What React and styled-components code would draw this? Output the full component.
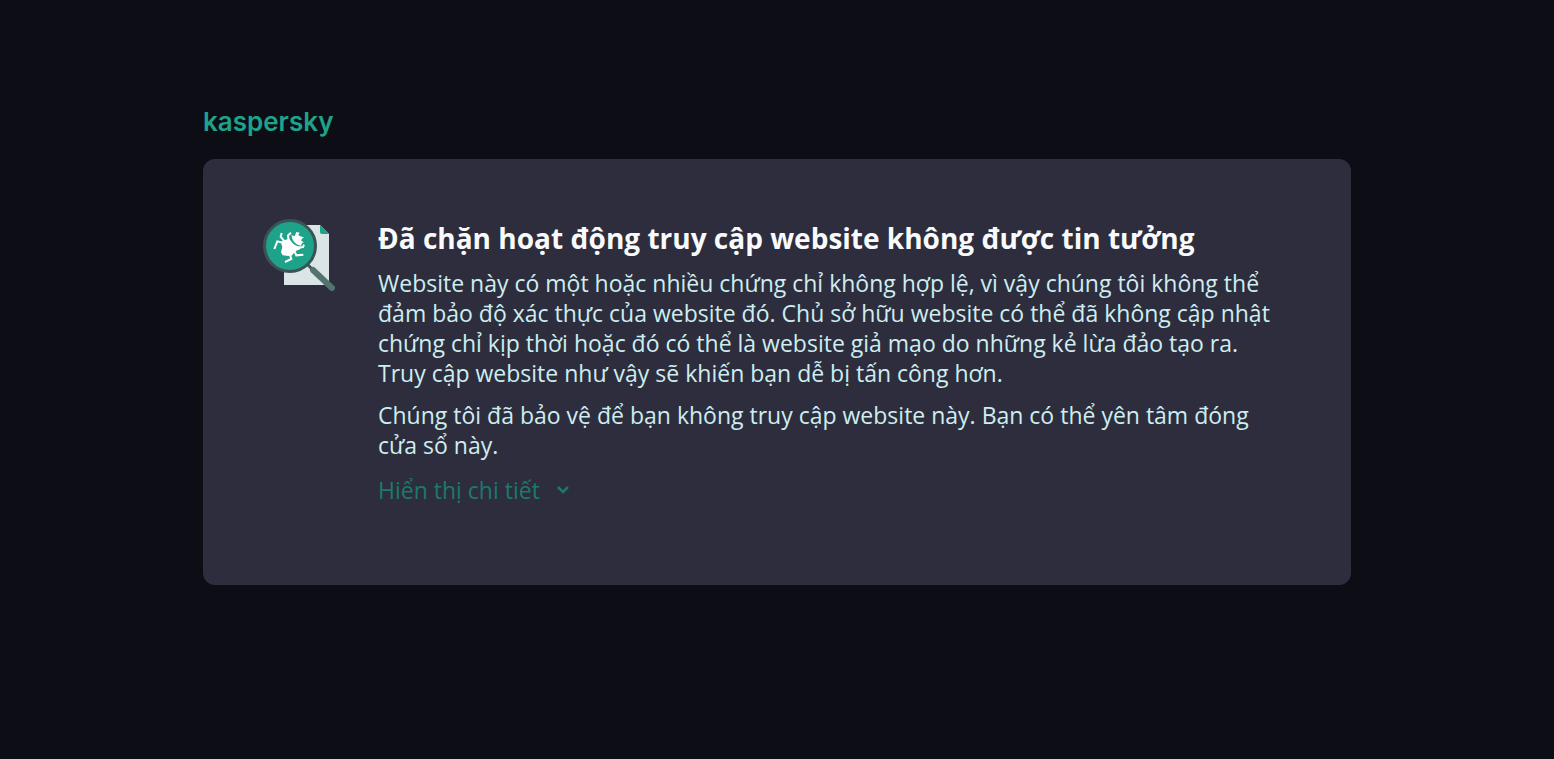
import React, { useState } from "react";
import styled, { createGlobalStyle } from "styled-components";

const GlobalStyle = createGlobalStyle`
  *, *::before, *::after { box-sizing: border-box; }
  body {
    margin: 0;
    background: #0d0d16;
    font-family: "Open Sans", "Noto Sans", sans-serif;
  }
`;

const Page = styled.div`
  max-width: 1188px;
  margin: 0 auto;
  padding: 104px 20px 40px;
`;

const Logo = styled.div`
  height: 36px;
  margin-bottom: 19px;
  color: #1fa28a;
  font: 600 26px/36px Inter, sans-serif;
`;

const Card = styled.main`
  display: flex;
  align-items: flex-start;
  gap: 43px;
  min-height: 426px;
  padding: 60px;
  border-radius: 12px;
  background: #2e2d3e;
`;

const Illustration = styled.svg`
  flex: none;
  width: 72px;
  height: 72px;
`;

const Content = styled.div`
  flex: 1;
  min-width: 0;
`;

const Title = styled.h1`
  margin: 0 0 11px;
  color: #f8fafc;
  font-size: 28px;
  line-height: 38px;
  font-weight: 700;
`;

const Paragraph = styled.p`
  margin: 0 0 12px;
  color: #cdeef0;
  font-size: 23px;
  line-height: 30px;
`;

const DetailsButton = styled.button`
  display: inline-flex;
  align-items: center;
  gap: 16px;
  margin-top: 3px;
  padding: 0;
  border: 0;
  background: none;
  color: #1b7a69;
  font: inherit;
  font-size: 23px;
  line-height: 30px;
  cursor: pointer;
`;

const Chevron = styled.svg`
  width: 14px;
  height: 10px;
  transform: ${(p) => (p.$open ? "rotate(180deg)" : "none")};
`;

function ThreatIcon() {
  return (
    <Illustration viewBox="0 0 72 72" aria-hidden="true">
      <path d="M21 6H57L66 15V66H21Z" fill="#dbe5e5" />
      <path d="M57 6L66 15H59Q57 15 57 13Z" fill="#1fa28a" />
      <path d="M45 46L50 51" stroke="#3c5655" strokeWidth="3" />
      <path d="M50 51L69 69" stroke="#527370" strokeWidth="6" strokeLinecap="round" />
      <circle cx="27" cy="27" r="25.5" fill="#1fa28a" stroke="#3a5354" strokeWidth="3" />
      <g transform="translate(-8 -9) scale(.33333)">
        <path
          fill="none"
          stroke="#fff"
          strokeWidth="6"
          d="M58 117L67 94L88 99M80 69L77 80L89 95M108 68L99 76L101 92M128 113L144 111L147 104M117 120L124 136L145 134M104 132L109 147L90 156"
        />
        <path
          fill="#fff"
          d="M83 92L102 86Q107 90 112 98Q122 109 138 110L135 118L122 123L115 131L108 139L83 136L78 127L82 111L78 98Z"
        />
        <path
          fill="#fff"
          d="M113 89L109 75L119 79L124 66L134 68L130 74L135 79L147 82L140 87L139 93L147 97L141 99L138 107Q121 104 113 89Z"
        />
      </g>
    </Illustration>
  );
}

export default function App() {
  const [open, setOpen] = useState(false);
  return (
    <>
      <GlobalStyle />
      <Page>
        <Logo>kaspersky</Logo>
        <Card>
          <ThreatIcon />
          <Content>
            <Title>Đã chặn hoạt động truy cập website không được tin tưởng</Title>
            <Paragraph>
              Website này có một hoặc nhiều chứng chỉ không hợp lệ, vì vậy chúng tôi không thể đảm bảo
              độ xác thực của website đó. Chủ sở hữu website có thể đã không cập nhật chứng chỉ kịp
              thời hoặc đó có thể là website giả mạo do những kẻ lừa đảo tạo ra. Truy cập website như
              vậy sẽ khiến bạn dễ bị tấn công hơn.
            </Paragraph>
            <Paragraph>
              Chúng tôi đã bảo vệ để bạn không truy cập website này. Bạn có thể yên tâm đóng cửa sổ
              này.
            </Paragraph>
            <DetailsButton type="button" aria-expanded={open} onClick={() => setOpen(!open)}>
              Hiển thị chi tiết
              <Chevron $open={open} viewBox="0 0 14 10" fill="none" aria-hidden="true">
                <path d="M2 2L7 7L12 2" stroke="currentColor" strokeWidth="2.5" />
              </Chevron>
            </DetailsButton>
          </Content>
        </Card>
      </Page>
    </>
  );
}
